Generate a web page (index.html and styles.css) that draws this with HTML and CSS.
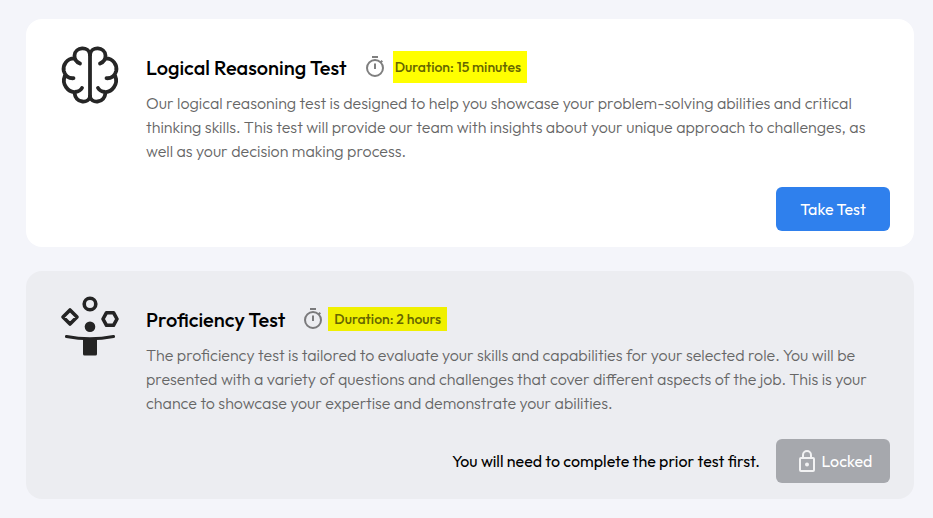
FILE: index.html
```html
<!DOCTYPE html>
<html lang="en">
<head>
<meta charset="utf-8">
<meta name="viewport" content="width=device-width, initial-scale=1">
<title>Tests</title>
<link rel="stylesheet" href="styles.css">
</head>
<body>
<main class="tests">
  <section class="card">
    <svg class="card-icon" viewBox="0 0 80 80" aria-hidden="true">
      <g fill="none" stroke="#262626" stroke-width="3.8" stroke-linecap="round" stroke-linejoin="round">
        <path d="M40 17V62"/>
        <path id="half" d="M40 19.500C39 11 25 11.500 24.500 20.500C24.300 24 26.500 27 30 28.500M24.500 23.300C17 23 12.500 30 13.800 36C15 41 19 43.500 23.500 43.200M14.800 41C11.500 49 18 57.500 25 57C28.500 56.500 31 55 32 53M24.500 58C26 69 39 68.500 40 61.500"/>
        <use href="#half" transform="translate(80 0) scale(-1 1)"/>
      </g>
    </svg>
    <div class="content">
      <header class="heading">
        <h2>Logical Reasoning Test</h2>
        <div class="duration">
          <svg class="timer" viewBox="0 0 22 24" aria-hidden="true"><g fill="none" stroke="#7f7f7f" stroke-width="2"><circle cx="11" cy="13" r="8"/><path d="M8 2H14M11 8.500V14M16.500 7.500L18.300 5.700"/></g></svg>
          <span class="mark mark-tall">Duration: 15 minutes</span>
        </div>
      </header>
      <p class="description">Our logical reasoning test is designed to help you showcase your problem-solving abilities and critical thinking skills. This test will provide our team with insights about your unique approach to challenges, as well as your decision making process.</p>
      <footer class="actions"><button class="button" type="button">Take Test</button></footer>
    </div>
  </section>
  <section class="card card-locked">
    <svg class="card-icon" viewBox="0 0 80 80" aria-hidden="true">
      <g fill="none" stroke="#242424" stroke-width="3.600" stroke-linejoin="round">
        <circle cx="40" cy="17" r="5.800"/>
        <path d="M20 23L27 30L20 37L13 30ZM56.500 25.700H63.500L67 32L63.500 38.300H56.500L53 32Z"/>
        <path d="M16.500 49.500Q40 54 63.500 49.500" stroke-width="3.200" stroke-linecap="round"/>
      </g>
      <circle cx="40" cy="39.800" r="5.300" fill="#242424"/>
      <path d="M33 51H47V67Q47 68.500 45.500 68.500H34.500Q33 68.500 33 67Z" fill="#242424"/>
    </svg>
    <div class="content">
      <header class="heading">
        <h2>Proficiency Test</h2>
        <div class="duration">
          <svg class="timer" viewBox="0 0 22 24" aria-hidden="true"><g fill="none" stroke="#7a7a7c" stroke-width="2"><circle cx="11" cy="13" r="8"/><path d="M8 2H14M11 8.500V14M16.500 7.500L18.300 5.700"/></g></svg>
          <span class="mark mark-short">Duration: 2 hours</span>
        </div>
      </header>
      <p class="description">The proficiency test is tailored to evaluate your skills and capabilities for your selected role. You will be presented with a variety of questions and challenges that cover different aspects of the job. This is your chance to showcase your expertise and demonstrate your abilities.</p>
      <footer class="actions">
        <span class="notice">You will need to complete the prior test first.</span>
        <button class="button button-locked" type="button" disabled>
          <svg class="lock" viewBox="0 0 18 24" aria-hidden="true"><g fill="none" stroke="#f2f2f3" stroke-width="2"><rect x="2" y="9" width="14" height="13" rx="1"/><path d="M5 9V6A4 4 0 0 1 13 6V9"/></g><circle cx="9" cy="15.500" r="2" fill="#f2f2f3"/></svg>
          Locked
        </button>
      </footer>
    </div>
  </section>
</main>
</body>
</html>
```
FILE: styles.css
```css
* { box-sizing: border-box; }
body {
  margin: 0;
  background: #f4f5fa;
  color: #000;
  font-family: Outfit, Lato, sans-serif;
  font-size: 16px;
  line-height: 24px;
}
.tests {
  display: grid;
  gap: 24px;
  padding: 19px 19px 19px 26px;
}
.card {
  display: flex;
  align-items: flex-start;
  gap: 16px;
  padding: 16px 24px;
  border-radius: 16px;
  background: #fff;
}
.card-locked { background: #ecedf1; }
.card-icon { flex: none; width: 80px; height: 80px; }
.content { flex: 1; min-width: 0; }
.heading {
  display: flex;
  align-items: center;
  gap: 17px;
  height: 32px;
  margin: 16px 0 8px;
}
h2 {
  margin: 0;
  padding-top: 2px;
  font-size: 20px;
  font-weight: 500;
  line-height: 30px;
}
.duration { display: flex; align-items: center; gap: 4px; }
.timer { width: 22px; height: 24px; }
.mark {
  background: #ff0;
  color: #666600;
  font-size: 14px;
  font-weight: 500;
}
.mark-tall { margin-left: 3px; padding: 4px 6px 4px 2px; }
.mark-short { padding: 0 6px; background: #f0f000; }
.description {
  margin: 0;
  color: #666;
  font-weight: 300;
}
.actions {
  display: flex;
  align-items: center;
  justify-content: flex-end;
  gap: 16px;
  margin-top: 24px;
}
.button {
  display: flex;
  align-items: center;
  justify-content: center;
  gap: 6px;
  min-width: 114px;
  height: 44px;
  padding: 0 16px;
  border: 0;
  border-radius: 6px;
  background: #2f80ed;
  color: #fff;
  font: inherit;
}
.button-locked { padding: 0 16px 0 20px; background: #a6a8ad; }
.lock { width: 18px; height: 24px; }
```
